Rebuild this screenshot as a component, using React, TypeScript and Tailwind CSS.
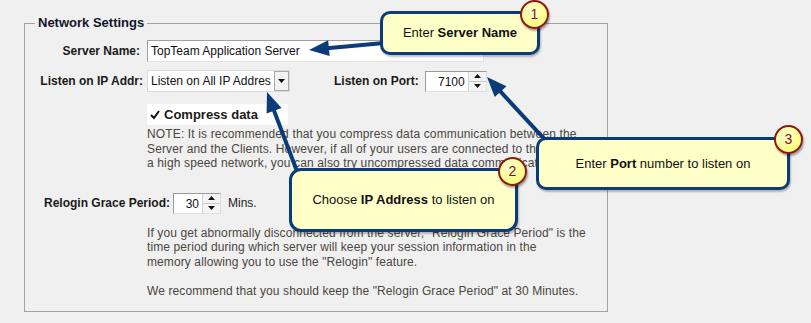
import React from "react";

const BLUE = "#0b3b78";

type Pt = [number, number];

const arrowHead = (from: Pt, to: Pt, len = 20, half = 8) => {
  const dx = to[0] - from[0];
  const dy = to[1] - from[1];
  const d = Math.hypot(dx, dy);
  const ux = dx / d;
  const uy = dy / d;
  const bx = to[0] - ux * len;
  const by = to[1] - uy * len;
  const a: Pt = [bx - uy * half, by + ux * half];
  const b: Pt = [bx + uy * half, by - ux * half];
  return {
    points: `${to[0]},${to[1]} ${a[0]},${a[1]} ${b[0]},${b[1]}`,
    base: [bx + ux * 2, by + uy * 2] as Pt,
  };
};

const arrows: { from: Pt; to: Pt }[] = [
  { from: [384, 43], to: [309, 50] },
  { from: [298, 174], to: [267, 92] },
  { from: [549, 144], to: [487, 77] },
];

const SpinArrows = () => (
  <div className="flex flex-col w-[18px] h-full border-l border-[#d4d4d4] bg-[#f4f4f4]">
    <div className="flex-1 flex items-center justify-center border-b border-[#c8c8c8]">
      <svg width="7" height="4" viewBox="0 0 7 4">
        <polygon points="3.5,0 7,4 0,4" fill="#111" />
      </svg>
    </div>
    <div className="flex-1 flex items-center justify-center">
      <svg width="7" height="4" viewBox="0 0 7 4">
        <polygon points="0,0 7,0 3.5,4" fill="#111" />
      </svg>
    </div>
  </div>
);

const Badge = ({ n, className }: { n: string; className: string }) => (
  <div
    className={`absolute size-[29px] rounded-full border-2 border-[#8a1818] bg-[radial-gradient(circle_at_40%_35%,#ffffd8,#ffff8a_60%,#f2ee6a)] shadow-[1px_2px_2px_rgba(0,0,0,0.35)] flex items-center justify-center text-[14px] text-[#8a1010] ${className}`}
  >
    {n}
  </div>
);

const App = () => {
  return (
    <div
      className="relative w-[811px] h-[323px] overflow-hidden bg-[#f0f0f0] text-[12px] text-[#1a1a1a]"
      style={{ fontFamily: '"Liberation Sans", Arial, sans-serif' }}
    >
      <div className="relative ml-[24px] mt-[23px] w-[584px] h-[289px] border border-[#a3a3a3]">
        <span className="absolute -top-[9px] left-[10px] px-[3px] bg-[#f0f0f0] text-[13px] font-bold leading-[16px] text-[#14142a]">
          Network Settings
        </span>

        {/* server name */}
        <div className="flex items-center mt-[16px] h-[22px]">
          <div className="w-[115px] text-right font-bold">Server Name:</div>
          <div className="ml-[7px] w-[337px] h-[22px] bg-white border-t border-l border-[#a0a0a0] border-r border-b border-r-[#e4e4e4] border-b-[#e4e4e4] flex items-center pl-[3px] text-[#111]">
            TopTeam Application Server
          </div>
        </div>

        {/* ip addr + port */}
        <div className="flex items-center mt-[8px] h-[22px]">
          <div className="w-[118px] text-right font-bold">Listen on IP Addr:</div>
          <div className="ml-[4px] w-[143px] h-[22px] bg-white border border-[#dadada] flex">
            <div className="flex-1 overflow-hidden whitespace-nowrap pl-[3px] leading-[20px] text-[#111]">
              Listen on All IP Addres
            </div>
            <div className="w-[15px] h-full border border-[#a8a8a8] bg-[#f2f2f2] flex items-center justify-center">
              <svg width="7" height="4" viewBox="0 0 7 4">
                <polygon points="0,0 7,0 3.5,4" fill="#111" />
              </svg>
            </div>
          </div>
          <div className="ml-[44px] font-bold">Listen on Port:</div>
          <div className="ml-[6px] w-[62px] h-[21px] bg-white border-t border-l border-[#9a9a9a] border-r border-b border-r-[#e0e0e0] border-b-[#e0e0e0] flex">
            <div className="flex-1 text-right pr-[3px] leading-[20px] text-[#111]">7100</div>
            <SpinArrows />
          </div>
        </div>

        {/* compress */}
        <div className="mt-[12px] ml-[122px] w-[141px] h-[21px] bg-white flex items-center">
          <svg width="12" height="12" viewBox="0 0 12 12" className="ml-[2px]">
            <polyline points="2,6 5,9 10,2" fill="none" stroke="#111" strokeWidth="2" />
          </svg>
          <span className="ml-[3px] font-bold text-[13px]">Compress data</span>
        </div>

        <div className="mt-[2px] ml-[122px] leading-[14.5px] tracking-[0.14px] text-[#4a4640] whitespace-nowrap">
          <div>NOTE: It is recommended that you compress data communication between the</div>
          <div>Server and the Clients. However, if all of your users are connected to the server over</div>
          <div>a high speed network, you can also try uncompressed data communication.</div>
        </div>

        {/* relogin */}
        <div className="flex items-center mt-[22px] h-[21px]">
          <div className="ml-[19px] font-bold">Relogin Grace Period:</div>
          <div className="ml-[3px] w-[48px] h-[21px] bg-white border-t border-l border-[#9a9a9a] border-r border-b border-r-[#e0e0e0] border-b-[#e0e0e0] flex">
            <div className="flex-1 text-right pr-[3px] leading-[20px] text-[#111]">30</div>
            <SpinArrows />
          </div>
          <div className="ml-[7px] text-[#222]">Mins.</div>
        </div>

        <div className="mt-[12px] ml-[122px] leading-[14.5px] tracking-[0.1px] text-[#4a4640] whitespace-nowrap">
          <div>If you get abnormally disconnected from the server, "Relogin Grace Period" is the</div>
          <div>time period during which server will keep your session information in the</div>
          <div>memory allowing you to use the "Relogin" feature.</div>
          <div>&nbsp;</div>
          <div>We recommend that you should keep the "Relogin Grace Period" at 30 Minutes.</div>
        </div>
      </div>

      {/* arrows */}
      <svg className="absolute left-0 top-0" width="811" height="323">
        {arrows.map((a, i) => {
          const h = arrowHead(a.from, a.to);
          return (
            <g key={i}>
              <line
                x1={a.from[0]}
                y1={a.from[1]}
                x2={h.base[0]}
                y2={h.base[1]}
                stroke={BLUE}
                strokeWidth="4"
              />
              <polygon points={h.points} fill={BLUE} />
            </g>
          );
        })}
      </svg>

      {/* callouts */}
      <div className="absolute left-[380px] top-[11px] w-[160px] h-[44px] rounded-[10px] border-[3px] border-[#0b3b78] bg-[#ffffc8] shadow-[1px_2px_2px_rgba(0,0,0,0.25)] flex items-center justify-center text-[13px] text-[#111]">
        <span>
          Enter <b>Server Name</b>
        </span>
      </div>
      <Badge n="1" className="left-[520px] top-0" />

      <div className="absolute left-[289px] top-[168px] w-[229px] h-[64px] rounded-[12px] border-[3px] border-[#0b3b78] bg-[#ffffc8] shadow-[1px_2px_2px_rgba(0,0,0,0.25)] flex items-center justify-center text-[13px] text-[#111]">
        <span>
          Choose <b>IP Address</b> to listen on
        </span>
      </div>
      <Badge n="2" className="left-[498px] top-[157px]" />

      <div className="absolute left-[536px] top-[137px] w-[254px] h-[53px] rounded-[10px] border-[3px] border-[#0b3b78] bg-[#ffffc8] shadow-[1px_2px_2px_rgba(0,0,0,0.25)] flex items-center justify-center text-[13px] text-[#111]">
        <span>
          Enter <b>Port</b> number to listen on
        </span>
      </div>
      <Badge n="3" className="left-[774px] top-[125px]" />
    </div>
  );
};

export default App;
